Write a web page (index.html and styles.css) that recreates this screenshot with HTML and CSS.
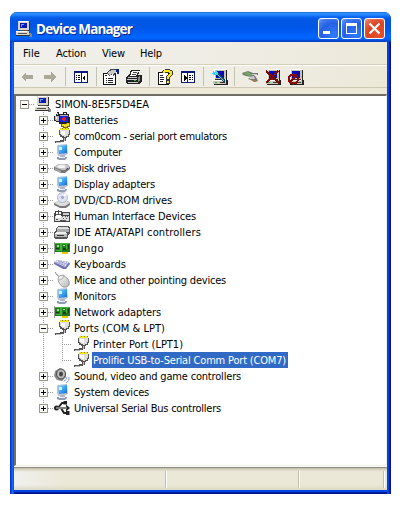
FILE: index.html
```html
<!DOCTYPE html>
<html lang="en">
<head>
<meta charset="utf-8">
<title>Device Manager</title>
<link rel="stylesheet" href="styles.css">
</head>
<body>
<svg class="defs" width="0" height="0">
<defs>
<linearGradient id="scr" x2="1" y2="1"><stop offset="0" stop-color="#8ed8ff"/><stop offset=".5" stop-color="#3ba6f2"/><stop offset="1" stop-color="#1567d0"/></linearGradient>
<linearGradient id="gry" x2="1" y2="1"><stop offset="0" stop-color="#fff"/><stop offset="1" stop-color="#b5b5b5"/></linearGradient>
<symbol id="pc" viewBox="0 0 16 16"><path fill="#333" d="M3 0h10v1h1v9H3zM0 10h13l1 2v3H0z"/><path fill="#d8d4c8" d="M2 0h11v9H2zM0 10h12l1 1v3H0z"/><path fill="#fff" d="M3 0h9v1H3zM0 10h11v1H0z"/><path fill="#0818b8" d="M4 2h7v5H4z"/><path fill="#6f9cff" d="M5 3h3v1H6v2H5z"/><path fill="#555" d="M4 9h8v1H4zM2 12h9v1H2z"/><path fill="#888" d="M13 12h2v1h1v3h-3v-1h1z"/></symbol>
<symbol id="batt" viewBox="0 0 16 16"><path fill="#222" d="M3 0h2v2h4V0h4v2h2v3h1v6h-3v1H5v-2H2V9H0V4h2V2h1z"/><path fill="#b8b8b8" d="M1 4h4v5H2V8H1zM3 1h1v2H3zM6 3h8v1H6z"/><path fill="#fff" d="M2 5h1v2H2zM10 1h2v1h-2z"/><path fill="#1622e4" d="M6 4h8v6H6z"/><path fill="#e32020" d="M8 6h1V5h2v1h1v2h-1v1H9V8H8z"/><path fill="#806800" d="M7 12h5v-1h4v4h-2v1H9v-1H7z"/><path fill="#f0d820" d="M8 12h5v-1h2v3h-2v1h-3v-1H8z"/></symbol>
<symbol id="plug" viewBox="0 0 16 16"><path fill="#f4e800" d="M6 0h9v2H6z"/><path fill="#775" d="M8 0h1v1H8zM11 0h1v1h-1zM14 0h1v1h-1z"/><path fill="#555" d="M5 2h11v5h-1v2h-2v1h-1v3h-2v1H6v1H1v-2h5v-1h3v-2H8V9H6V7H5z"/><path fill="#ddd" d="M6 2h9v4h-1v2h-2v1h-2V8H8V7H7V6H6z"/><path fill="#fff" d="M7 3h4v4H9V6H7z"/><path fill="#bbb" d="M10 10h1v3h-1zM2 14h5v1H2z"/></symbol>
<symbol id="mon" viewBox="0 0 16 16"><path fill="#b9c4d8" d="M3 1l10-1 1 10-4 2H4L3 9z"/><path fill="url(#scr)" d="M4 2l9-1v8l-8 1z"/><path fill="#d4f2ff" d="M5 3h3v3H5z"/><path fill="#b2b6c4" d="M6 11h5v2H6z"/><path fill="#8d98b6" d="M3 13h10v1l-2 2H5l-2-1z"/><path fill="#eef" d="M5 13h6v1H5z"/></symbol>
<symbol id="disk" viewBox="0 0 16 16"><path fill="#777" d="M0 7l5-3h8l3 3v2l-5 4H7L0 10z"/><path fill="#c8c8c8" d="M0 7l5-3h7l4 3-5 3H8z"/><ellipse cx="7.500" cy="6.500" rx="4" ry="1.500" fill="#f5f5f5"/><path fill="#a8a8a8" d="M1 8l6 3v2L1 10z"/><path fill="#444" d="M12 9l2-1v1l-2 1z"/></symbol>
<symbol id="cd" viewBox="0 0 16 16"><path fill="#777" d="M0 11l4-2h10l2 2v2l-4 3H6l-6-3z"/><path fill="#ddd" d="M0 11l4-2h9l3 2-5 3H6z"/><circle cx="8.500" cy="5.500" r="5" fill="#dfe3f4" stroke="#a4a9be" stroke-width=".8"/><path fill="#fff" d="M8 5l3-4 2 2z"/><circle cx="8.500" cy="5.500" r="1.400" fill="#9aa0c8"/></symbol>
<symbol id="hid" viewBox="0 0 16 16"><path fill="#444" d="M1 3h3V2h1v1h3v1h8v10H0V5h1z"/><path fill="#ddd" d="M1 8h14v5H1z"/><path fill="#fff" d="M2 4h5v6H2z"/><path fill="#555" d="M4 2h1v4H4zM2 6h5v1H2zM8 8h1v1H8zM11 8h1v1h-1zM13 8h1v1h-1zM9 10h1v1H9zM12 10h1v1h-1zM2 11h2v1H2zM6 12h6v1H6z"/><path fill="#ccc" d="M9 5h6v2H9z"/></symbol>
<symbol id="ide" viewBox="0 0 16 16"><path fill="#555" d="M4 2h10l2 2v5l-2 2v3l-2 1H1l-1-2V8l2-1V4z"/><path fill="#ddd" d="M4 3h9l2 2H2z"/><path fill="#aaa" d="M3 5h12v3H3z"/><path fill="#eee" d="M2 8h10l1 2H1z"/><path fill="#bbb" d="M1 10h12v3H1z"/><path fill="#333" d="M3 11h7v1H3z"/></symbol>
<symbol id="card" viewBox="0 0 16 16"><path fill="#1f7a20" d="M1 3h15v9H1z"/><path fill="#44b13e" d="M1 3h15v1H1zM6 4h2v7H6zM12 4h1v5h-1zM2 10h4v1H2z"/><path fill="#a6e68a" d="M3 5h2v2H3zM9 5h2v1H9z"/><path fill="#133c12" d="M9 8h3v2H9zM2 8h3v1H2zM14 5h1v4h-1z"/><path fill="#999" d="M0 2h1v12H0z"/><path fill="#e8cc00" d="M8 12h6v2H8z"/></symbol>
<symbol id="kbd" viewBox="0 0 16 16"><path fill="#6f74ae" d="M0 6l3-2 12 2 1 2-4 5H9L0 8z"/><path fill="#dfe1f7" d="M0 6l3-2 12 2-4 5z"/><path stroke="#9296c6" stroke-width=".7" d="M2 6l9 3.500M4 5l9 3M4 8l4-3M7 9l3-4M9 10l4-4"/></symbol>
<symbol id="mouse" viewBox="0 0 16 16"><path fill="none" stroke="#888" d="M6 5L3 3l-2-3"/><path d="M4 6q1-3 5-3l5 4q2 3 1 6-2 3-6 2-5-3-5-9z" fill="url(#gry)" stroke="#888" stroke-width=".8"/><path stroke="#aaa" d="M5 8q4 0 5-5" fill="none"/></symbol>
<symbol id="snd" viewBox="0 0 16 16"><path fill="#888" d="M1 3l5-3 5 3 1 6-4 4-5-1-3-4z"/><ellipse cx="7" cy="6" rx="4.500" ry="5" fill="#bbb" stroke="#444"/><ellipse cx="7" cy="6" rx="2" ry="2.500" fill="#444"/><path d="M10 13q3-1 3-4M12 15q4-2 3-6" fill="none" stroke="#879be0"/></symbol>
<symbol id="usb" viewBox="0 0 16 16"><path fill="none" stroke="#222" stroke-width="2" d="M2 8h12M4 8l4-5h3M7 8l3 5h3"/><path fill="#222" d="M12 4.500l4 3.500-4 3.500zM9.500 1h3.500v3.500H9.500zM12 11h3.500v4H12z"/><circle cx="2.500" cy="8" r="2.500" fill="#222"/><path fill="#ddd" d="M2 7.500h11v1H2z"/></symbol>
<symbol id="back" viewBox="0 0 12 10"><path fill="#aca899" d="M0 5l5-5v3h7v4H5v3z"/></symbol>
<symbol id="pane" viewBox="0 0 14 12"><path fill="#0a1a78" d="M0 0h14v12H0z"/><path fill="#fff" d="M1 2h6v9H1zM8 2h5v9H8z"/><path fill="#000" d="M2 4h1v1H2zM2 6h1v1H2zM2 8h1v1H2zM4 4h2v1H4zM4 6h2v1H4zM4 8h2v1H4zM11 4v6L8 7z"/></symbol>
<symbol id="prop" viewBox="0 0 16 16"><path fill="#111" d="M0 4h13v12H0z"/><path fill="#fff" d="M1 5h11v10H1z"/><path fill="#222" d="M3 9h1v1H3zM5 9h5v1H5zM3 11h1v1H3zM5 11h5v1H5zM3 13h1v1H3zM5 13h5v1H5zM2 6h2v1H2z"/><path fill="#444" d="M4 3l4-3h5v5l-3 2V5L6 7 4 5z"/><path fill="#c8c8c8" d="M5 3l4-2h4v3l-4 1-3 1z"/><path fill="#102080" d="M13 0h3v5h-2z"/></symbol>
<symbol id="print" viewBox="0 0 16 16"><path fill="#222" d="M5 1h9l-2 5h3l1 1v5l-3 3H1l-1-2V8l3-2z"/><path fill="#fff" d="M6 2h7l-3 5H4z"/><path fill="#444" d="M7 3h4v1H7zM6 5h4v1H6z"/><path fill="#ccc" d="M2 8h9v1H2zM1 10h10v1H1zM2 13h10v1H2z"/><path fill="#888" d="M12 8l2-1v4l-2 2z"/><path fill="#16c030" d="M8 11h2v1H8z"/></symbol>
<symbol id="help" viewBox="0 0 16 16"><path fill="#111" d="M0 3h11v13H0z"/><path fill="#fff" d="M1 4h9v11H1z"/><path fill="#223" d="M2 6h3v1H2zM2 8h4v1H2zM2 10h4v1H2zM2 12h3v1H2z"/><path fill="none" stroke="#333" stroke-width="3.800" d="M6 4q0-2 3-2 4 0 4 2 0 2-3 4v3"/><path fill="none" stroke="#ffe818" stroke-width="2.200" d="M6 4q0-2 3-2 4 0 4 2 0 2-3 4v2"/><path fill="#333" d="M8 11h4v4H8z"/><path fill="#ffe818" d="M9 12h2v2H9z"/></symbol>
<symbol id="box" viewBox="0 0 16 16"><path fill="#222" d="M3 1h12v10h1v5H2v-1h12V2H3z"/><path fill="#c8c4b8" d="M2 0h12v10H2zM1 11h13v4H1z"/><path fill="#fff" d="M2 0h12v1H3v9H2zM1 11h12v1H1z"/><path fill="#0808b0" d="M4 2h8v7H4z"/><path fill="#333" d="M3 10h10v1H3zM8 13h5v1H8z"/><path fill="#20c020" d="M3 13h2v1H3z"/></symbol>
<symbol id="scan" viewBox="0 0 16 16"><use href="#box" width="16" height="16"/><path fill="#146" d="M5 4h2l6 7v2h-2L4 6z"/><path stroke="#48d8ff" stroke-width="1.300" d="M5 5l7 7"/><path fill="#38d8f0" d="M1 2h1v1h2V1h1v2h1v2L5 6H2L0 5V4h1z"/><path fill="#fff" d="M3 4h1v1H3z"/></symbol>
<symbol id="hw" viewBox="0 0 16 16"><path fill="#777" d="M0 4l6-2 5 2h5v2h-4l2 2 2 4-4 1-3-2-3-1 3-2-5-1-3-1z"/><path fill="#70aa60" d="M1 4l5-1 5 3-4 1z"/><path fill="#ccc" d="M10 5h5v1h-5zM7 8l5-1 1 3H8z"/><path fill="#a67c45" d="M11 10l4 2-2 1-3-2z"/></symbol>
<symbol id="del" viewBox="0 0 16 16"><use href="#box" width="16" height="16"/><path stroke="#7c0808" stroke-width="2.300" d="M1 2l13 12M13 2L1 14"/></symbol>
<symbol id="dis" viewBox="0 0 16 16"><use href="#box" width="16" height="16"/><circle cx="5.500" cy="10" r="4.500" fill="none" stroke="#8c0808" stroke-width="2.300"/><path stroke="#8c0808" stroke-width="2" d="M2 13l7-7"/></symbol>
</defs>
</svg>
<div class="window">
  <header class="titlebar">
    <svg class="icon"><use href="#pc"/></svg>
    <h1 data-width="96">Device Manager</h1>
    <div class="controls">
      <span class="control"><svg viewBox="0 0 21 21"><path fill="#fff" d="M5 13h7v3H5z"/></svg></span>
      <span class="control"><svg viewBox="0 0 21 21"><path fill="#fff" fill-rule="evenodd" d="M5 5h11v11H5zM6 8v7h9V8z"/></svg></span>
      <span class="control close"><svg viewBox="0 0 21 21"><path stroke="#fff" stroke-width="2.200" d="M5.500 5.500l10 10M15.500 5.500l-10 10"/></svg></span>
    </div>
  </header>
  <nav class="menu"><span data-width="17">File</span><span data-width="30">Action</span><span data-width="23">View</span><span data-width="22">Help</span></nav>
  <div class="toolbar">
    <svg class="arrow"><use href="#back"/></svg>
    <svg class="arrow forward"><use href="#back"/></svg>
    <i class="sep s1"></i>
    <svg class="pane"><use href="#pane"/></svg>
    <i class="sep s2"></i>
    <svg class="icon"><use href="#prop"/></svg>
    <svg class="icon print"><use href="#print"/></svg>
    <i class="sep s3"></i>
    <svg class="icon"><use href="#help"/></svg>
    <svg class="pane flip"><use href="#pane"/></svg>
    <i class="sep s4"></i>
    <svg class="icon"><use href="#scan"/></svg>
    <i class="sep s5"></i>
    <svg class="icon smooth"><use href="#hw"/></svg>
    <svg class="icon last"><use href="#del"/></svg>
    <svg class="icon last"><use href="#dis"/></svg>
  </div>
  <main class="tree" id="tree"></main>
  <footer class="status"><span class="cell wide"></span><span class="cell mid"></span><span class="cell"></span></footer>
</div>
<script src="tree.js"></script>
</body>
</html>
```
FILE: styles.css
```css
* { box-sizing: border-box; }
body { margin: 0; padding: 12px 0 0 10px; height: 506px; overflow: hidden; background: #fff; font: 11px/16px "DejaVu Sans Condensed", "DejaVu Sans", sans-serif; color: #000; }
.defs { position: absolute; }
svg { display: block; flex: none; }
.window { width: 381px; height: 482px; display: flex; flex-direction: column; padding: 0 4px 4px; border-radius: 7px 7px 0 0; background: linear-gradient(90deg, #0831d9 0 1px, #0050ee 1px 2px, #166aee 2px 3px, #0855dd 3px 4px, transparent 4px 377px, #0044e4 377px 379px, #001ea0 379px 380px, #00138c 380px), linear-gradient(0deg, #00138c 0 1px, #001ea0 1px 2px, #0044e4 2px 4px, #0050ee 4px); }
.titlebar { flex: none; height: 30px; margin: 0 -4px; padding: 0 6px 0 6px; display: flex; align-items: center; border-radius: 7px 7px 0 0; background: linear-gradient(#0a54d8 0, #3290ff 1px, #2384fb 3px, #0963ee 5px, #0257e3 8px, #0055e5 14px, #005bf2 20px, #0066ff 25px, #0060f6 27px, #0046d0 29px, #0038b8 30px); }
.icon { width: 16px; height: 16px; shape-rendering: crispEdges; }
.smooth { shape-rendering: auto; }
.titlebar .icon { margin-top: 4px; }
h1 { flex: none; margin: 4px 0 0 4px; font: bold 13.5px/18px "Open Sans", sans-serif; color: #fff; text-shadow: 1px 1px 0 #0a2a90; white-space: nowrap; }
.controls { display: flex; gap: 2px; margin: 3px 0 0 auto; }
.control { width: 21px; height: 21px; border: 1px solid #fff; border-radius: 3px; background: radial-gradient(circle at 75% 85%, #2f7bff, #2560e4 55%, #4079ef 80%, #7da4f8); }
.control svg { width: 21px; height: 21px; margin: -1px; }
.close { background: radial-gradient(circle at 75% 85%, #e8502c, #dc4420 55%, #e66849 80%, #f0a18e); }
.menu { flex: none; height: 23px; padding: 3px 0 0 9px; display: flex; line-height: 17px; background: linear-gradient(90deg, #f0efea, #eeece2 70%, #ece9d8); border-bottom: 1px solid #d4cfba; }
.menu span { white-space: nowrap; }
.menu span + span { margin-left: 16px; }
.menu span:last-child { margin-left: 15px; }
.toolbar { flex: none; height: 23px; margin-bottom: 6px; padding-left: 7px; display: flex; align-items: center; border-top: 1px solid #fff; border-bottom: 1px solid #cdc9b5; background: linear-gradient(90deg, #f2f1ed, #eeece2 70%, #ece9d8); box-shadow: 0 6px 0 #ece9d8; }
.arrow { width: 12px; height: 10px; shape-rendering: crispEdges; }
.forward { transform: scaleX(-1); margin-left: 11px; }
.pane { width: 14px; height: 12px; shape-rendering: crispEdges; }
.flip { transform: scaleX(-1); margin-left: 7px; }
.print { margin-left: 7px; }
.sep { flex: none; width: 1px; height: 19px; background: #c5c2b2; }
.s1 { margin: 0 8px 0 9px; }
.s2 { margin: 0 6px 0 8px; }
.s3 { margin: 0 8px 0 7px; }
.s4 { margin: 0 8px; }
.s5 { margin: 0 7px 0 6px; }
.last { margin-left: 7px; }
.tree { flex: 1; min-height: 0; background: #fff; border: solid; border-width: 2px 1px 1px 2px; border-color: #716f64 #f1efe2 #f1efe2 #716f64; }
.tree ul { margin: 0; padding: 0; list-style: none; }
.tree ul ul { background: repeating-linear-gradient(#999 0 1px, #fff 1px 2px) 27px 0 / 1px calc(100% - 8px) no-repeat; }
.tree ul ul ul { background-position: 46px 0; }
.row { display: flex; align-items: center; height: 16px; padding-left: 4px; }
ul ul .row { padding-left: 23px; }
ul ul ul .row { padding-left: 46px; }
.expander { flex: none; width: 9px; height: 9px; border: 1px solid #9a9788; background: linear-gradient(#000, #000) 1px 3px / 5px 1px no-repeat, #fbfaf7; }
.expander.plus { background: linear-gradient(#000, #000) 1px 3px / 5px 1px no-repeat, linear-gradient(#000, #000) 3px 1px / 1px 5px no-repeat, #fbfaf7; }
.dots { flex: none; width: 6px; height: 1px; background: repeating-linear-gradient(90deg, #999 0 1px, #fff 1px 2px); }
ul ul ul .dots { width: 10px; margin-right: 1px; }
.label { height: 16px; margin-left: 2px; padding: 0 2px; line-height: 18px; white-space: nowrap; }
ul ul ul .label { margin-left: 3px; padding-left: 1px; }
.selected { background: #316ac5; color: #fff; }
.status { flex: none; height: 24px; display: flex; padding: 4px 2px 2px 0; border-top: 1px solid #fff; background: linear-gradient(#8d8b7f 0 1px, #c9c6b4 1px 2px, #dedbca 3px, transparent 5px, transparent 18px, #dbd8c5), linear-gradient(90deg, #f0f0ee, #ebe8d7 50px); }
.cell { flex: 1; height: 17px; border-right: 1px solid #fff; box-shadow: inset -1px 0 #c2bfae; }
.wide { flex: 0 0 153px; }
.mid { flex: 0 0 133px; }
```
FILE: tree.js
```js
// Each node: icon, label, label width in pixels, row state, children.
const ports = [
  ["plug", "Printer Port (LPT1)", 90],
  ["plug", "Prolific USB-to-Serial Comm Port (COM7)", 193, "selected"]
];
const devices = [
  ["batt", "Batteries", 44], ["plug", "com0com - serial port emulators", 153],
  ["mon", "Computer", 48], ["disk", "Disk drives", 52],
  ["mon", "Display adapters", 81], ["cd", "DVD/CD-ROM drives", 98],
  ["hid", "Human Interface Devices", 122], ["ide", "IDE ATA/ATAPI controllers", 127],
  ["card", "Jungo", 30], ["kbd", "Keyboards", 52],
  ["mouse", "Mice and other pointing devices", 152], ["mon", "Monitors", 42],
  ["card", "Network adapters", 87], ["plug", "Ports (COM & LPT)", 91, "", ports],
  ["snd", "Sound, video and game controllers", 167], ["mon", "System devices", 75],
  ["usb", "Universal Serial Bus controllers", 147]
];
const curved = new Set(["mon", "disk", "cd", "kbd", "mouse", "snd", "usb"]);

function list(nodes, depth) {
  const ul = document.createElement("ul");
  for (const [icon, text, width, state, kids] of nodes) {
    const li = document.createElement("li");
    const expander = depth < 2 ? `<span class="expander ${kids ? "" : "plus"}"></span>` : "";
    li.innerHTML = `<div class="row">${expander}<span class="dots"></span><svg class="icon ${curved.has(icon) ? "smooth" : ""}"><use href="#${icon}"/></svg><span class="label ${state || ""}"><span data-width="${width}"></span></span></div>`;
    li.querySelector("[data-width]").textContent = text;
    if (kids) li.append(list(kids, depth + 1));
    ul.append(li);
  }
  return ul;
}
document.getElementById("tree").append(list([["pc", "SIMON-8E5F5D4EA", 94, "", devices]], 0));

// Track each text so that it fills its nominal width.
for (const el of document.querySelectorAll("[data-width]")) {
  const spacing = (el.dataset.width - el.getBoundingClientRect().width) / el.textContent.length;
  el.style.letterSpacing = spacing + "px";
}
```
